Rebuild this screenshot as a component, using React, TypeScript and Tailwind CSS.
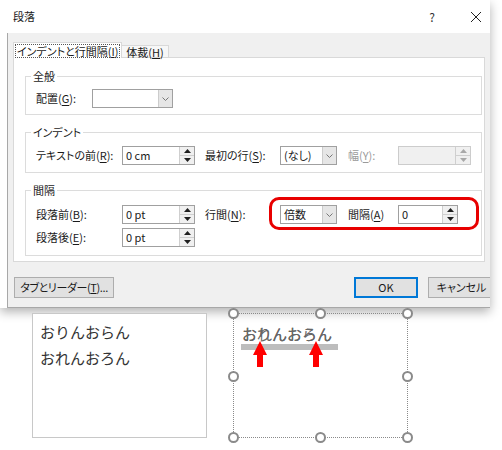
import React from 'react';

const jp = "font-['Noto_Sans_CJK_JP',sans-serif] [font-feature-settings:'palt']";

function Spin({ disabled }: { disabled?: boolean }) {
  const c = disabled ? '#a8a8a8' : '#1f1f1f';
  return (
    <div className="flex w-[15px] flex-col border-l border-[#cfcfcf] bg-[#f0f0f0]">
      <div className="flex flex-1 items-center justify-center border-b border-[#cfcfcf]">
        <svg width="7" height="4" viewBox="0 0 7 4">
          <path d="M0 4 L3.5 0 L7 4Z" fill={c} />
        </svg>
      </div>
      <div className="flex flex-1 items-center justify-center">
        <svg width="7" height="4" viewBox="0 0 7 4">
          <path d="M0 0 L7 0 L3.5 4Z" fill={c} />
        </svg>
      </div>
    </div>
  );
}

function NumInput({ value, className, disabled }: { value: string; className: string; disabled?: boolean }) {
  return (
    <div
      className={`flex h-[19px] border ${disabled ? 'border-[#cccccc] bg-[#f0f0f0]' : 'border-[#a0a0a0] bg-white'} ${className}`}
    >
      <span className="flex-1 pl-[3px] leading-[17px]">{value}</span>
      <Spin disabled={disabled} />
    </div>
  );
}

function Select({ value, className }: { value: string; className: string }) {
  return (
    <div className={`flex h-[19px] border border-[#a0a0a0] bg-white ${className}`}>
      <span className="flex-1 pl-[3px] leading-[17px]">{value}</span>
      <div className="flex w-[14px] items-center justify-center border-l border-[#cccccc] bg-[#e6e6e6]">
        <svg width="7" height="4" viewBox="0 0 7 4">
          <path d="M0.5 0.5 L3.5 3.5 L6.5 0.5" fill="none" stroke="#777" strokeWidth="1" />
        </svg>
      </div>
    </div>
  );
}

function Label({ text, k, className, disabled }: { text: string; k: string; className: string; disabled?: boolean }) {
  return (
    <span className={`whitespace-nowrap leading-[19px] ${disabled ? 'text-[#9a9a9a]' : ''} ${className}`}>
      {text}(<span className="underline underline-offset-[2px]">{k}</span>):
    </span>
  );
}

function Group({ title, children, className }: { title: string; children: React.ReactNode; className: string }) {
  return (
    <fieldset className={`w-[457px] border border-[#dcdcdc] ${className}`}>
      <legend className="ml-[5px] px-[2px] leading-[16px]">{title}</legend>
      {children}
    </fieldset>
  );
}

function Handle({ className }: { className: string }) {
  return <div className={`absolute h-[11px] w-[11px] rounded-full border-2 border-[#8a8a8a] bg-white ${className}`} />;
}

function Arrow({ className }: { className: string }) {
  return (
    <svg className={`absolute ${className}`} width="14" height="26" viewBox="0 0 14 26">
      <path d="M7 0 L14 14 L10 14 L10 26 L4 26 L4 14 L0 14Z" fill="#ff0000" />
    </svg>
  );
}

export default function App() {
  return (
    <div className={`relative h-[450px] w-[502px] overflow-hidden bg-white text-[11px] text-[#1a1a1a] ${jp}`}>
      {/* dialog */}
      <div className="w-[490px] shadow-[0_4px_10px_rgba(0,0,0,0.3)]">
        <div className="flex h-[33px] items-center bg-white pl-[13px] pr-[8px]">
          <span className="text-[11px]">段落</span>
          <span className="ml-auto w-[10px] text-center text-[12px] leading-none text-[#333]">?</span>
          <svg className="ml-[33px]" width="12" height="12" viewBox="0 0 12 12">
            <path d="M1 1 L11 11 M11 1 L1 11" stroke="#222" strokeWidth="1" />
          </svg>
        </div>

        <div className="ml-[7px] h-[275px] overflow-hidden border-b border-l border-[#a8a8a8] bg-[#f0f0f0]">
          {/* tabs */}
          <div className="flex h-[24px] items-end pl-[5px]">
            <div className="relative z-10 mb-[-1px] flex h-[16px] shrink-0 items-center border border-b-0 border-[#d9d9d9] bg-white px-[1px]">
              <span className="whitespace-nowrap border border-dotted border-[#555] px-[1px] leading-[12px]">
                インデントと行間隔(<span className="underline">I</span>)
              </span>
            </div>
            <div className="flex h-[12px] shrink-0 items-center whitespace-nowrap border border-b-0 border-l-0 border-[#d9d9d9] bg-[#f7f7f7] px-[4px] leading-[12px]">
              体裁(<span className="underline">H</span>)
            </div>
          </div>

          {/* tab panel */}
          <div className="mx-[5px] h-[205px] border border-[#d9d9d9] bg-white pl-[11px] pt-[10px]">
            <Group title="全般" className="">
              <div className="flex pb-[6px] pl-[10px] pt-[5px]">
                <Label text="配置" k="G" className="w-[56px]" />
                <Select value="" className="w-[81px]" />
              </div>
            </Group>

            <Group title="インデント" className="mt-[9px]">
              <div className="flex pb-[7px] pl-[10px] pt-[6px]">
                <Label text="テキストの前" k="R" className="w-[86px]" />
                <NumInput value="0 cm" className="w-[73px]" />
                <Label text="最初の行" k="S" className="ml-[10px] w-[75px]" />
                <Select value="(なし)" className="w-[57px]" />
                <Label text="幅" k="Y" className="ml-[11px] w-[50px]" disabled />
                <NumInput value="" className="w-[73px]" disabled />
              </div>
            </Group>

            <Group title="間隔" className="mt-[9px]">
              <div className="flex flex-col gap-[4px] pb-[8px] pl-[10px] pt-[7px]">
                <div className="flex">
                  <Label text="段落前" k="B" className="w-[86px]" />
                  <NumInput value="0 pt" className="w-[73px]" />
                  <Label text="行間" k="N" className="ml-[10px] w-[75px]" />
                  <Select value="倍数" className="w-[57px]" />
                  <span className="ml-[11px] w-[50px] whitespace-nowrap leading-[19px]">
                    間隔(<span className="underline underline-offset-[2px]">A</span>)
                  </span>
                  <NumInput value="0" className="w-[60px]" />
                </div>
                <div className="flex">
                  <Label text="段落後" k="E" className="w-[86px]" />
                  <NumInput value="0 pt" className="w-[73px]" />
                </div>
              </div>
            </Group>
          </div>

          {/* footer buttons */}
          <div className="mt-[15px] flex">
            <div className="ml-[6px] flex h-[21px] w-[100px] shrink-0 items-center justify-center whitespace-nowrap border border-[#adadad] bg-[#e1e1e1] tracking-[-0.4px]">
              タブとリーダー(<span className="underline">T</span>)...
            </div>
            <div className="ml-[240px] flex h-[21px] w-[64px] shrink-0 items-center justify-center border-2 border-[#0078d7] bg-[#e1e1e1]">
              OK
            </div>
            <div className="ml-[10px] flex h-[21px] w-[75px] shrink-0 items-center justify-center whitespace-nowrap border border-[#adadad] bg-[#e1e1e1] pr-[8px]">
              キャンセル
            </div>
          </div>
        </div>
      </div>

      {/* document preview */}
      <div className="flex gap-[26px] pl-[32px] pt-[5px] font-['Noto_Sans_CJK_JP',sans-serif] [font-feature-settings:normal]">
        <div className="relative h-[125px] w-[175px] border border-[#c8c8c8] bg-white pl-[7px] pt-[5px] text-[15px] leading-[26px] text-[#333]">
          <div>おりんおらん</div>
          <div>おれんおろん</div>
        </div>
        <div className="relative h-[125px] w-[175px] border border-dotted border-[#8a8a8a]">
          <div className="absolute left-[7px] top-[30px] h-[6px] w-[97px] bg-[#bdbdbd]" />
          <span className="absolute left-[8px] top-[10px] text-[15px] leading-[20px] text-[#666]">おりんおらん</span>
          <span className="absolute left-[8px] top-[10px] text-[15px] leading-[20px] text-[#666]">おれんおろん</span>
          <Arrow className="left-[19px] top-[27px]" />
          <Arrow className="left-[75px] top-[27px]" />
          <Handle className="left-[-6px] top-[-6px]" />
          <Handle className="left-[81px] top-[-6px]" />
          <Handle className="right-[-6px] top-[-6px]" />
          <Handle className="left-[-6px] top-[57px]" />
          <Handle className="right-[-6px] top-[57px]" />
          <Handle className="bottom-[-6px] left-[-6px]" />
          <Handle className="bottom-[-6px] left-[81px]" />
          <Handle className="bottom-[-6px] right-[-6px]" />
        </div>
      </div>

      {/* highlight */}
      <div className="absolute left-[269px] top-[197px] h-[33px] w-[210px] rounded-[10px] border-[3px] border-[#e80000]" />
    </div>
  );
}
